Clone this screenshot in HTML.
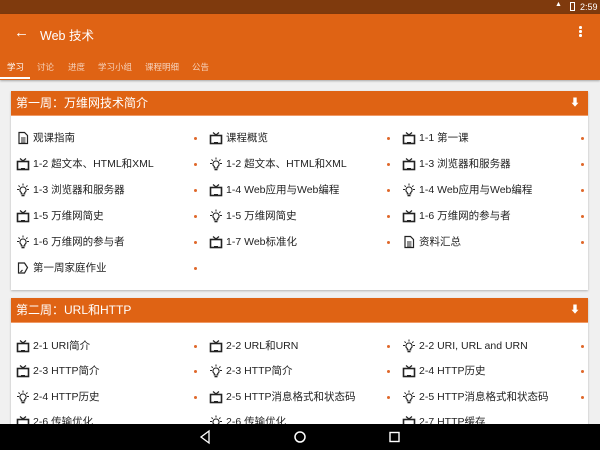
<!DOCTYPE html>
<html><head><meta charset="utf-8"><style>
*{margin:0;padding:0;box-sizing:border-box}
body{width:600px;height:450px;overflow:hidden;background:#f0f0f0;font-family:"Liberation Sans","Noto Sans CJK SC",sans-serif;position:relative}
.abs{position:absolute}
#sb{left:0;top:0;width:600px;height:14px;background:#7f3a0d;color:#fff;font-size:9px}
#ab{left:0;top:14px;width:600px;height:66px;background:#df6314;color:#fff;box-shadow:0 1px 2px rgba(0,0,0,.3)}
.tab{position:absolute;top:47px;font-size:8.5px;color:#f6d3bd}
.card{position:absolute;left:11px;width:577px;background:#fff;box-shadow:0 1px 2px rgba(0,0,0,.25)}
.hd{height:25px;background:#df6314;color:#fff;font-size:12px;line-height:25px;padding-left:5px;position:relative;border-bottom:1px solid #f09a66}
.it{position:absolute;font-size:10.5px;color:#222;white-space:nowrap;line-height:14px}
.it svg{position:absolute;left:-17px;top:0}
.dot{position:absolute;width:3px;height:3px;border-radius:50%;background:#e0682a}
#nb{left:0;top:424px;width:600px;height:26px;background:#000}
</style></head><body>
<svg width="0" height="0" style="position:absolute">
<symbol id="tv" viewBox="0 0 14 14"><path d="M4 1.5l3 2.5 3-2.5" fill="none" stroke="#222" stroke-width="1.2"/><rect x="1.5" y="4.5" width="11" height="8" fill="none" stroke="#222" stroke-width="1.6"/><rect x="5" y="11" width="4" height="1.8" fill="#222"/></symbol>
<symbol id="bulb" viewBox="0 0 14 14"><path d="M7 4a3 3 0 0 0-1.7 5.5V11h3.4V9.5A3 3 0 0 0 7 4z" fill="none" stroke="#222" stroke-width="1.1"/><rect x="5.5" y="12" width="3" height="1.3" fill="#222"/><path d="M7 0.5v2M1 6.5h2M11 6.5h2M2.5 2.5l1.3 1.3M11.5 2.5l-1.3 1.3" stroke="#222" stroke-width="1"/></symbol>
<symbol id="doc" viewBox="0 0 14 14"><path d="M3 1.5h5.5l3 3v8H3z" fill="none" stroke="#222" stroke-width="1.2"/><path d="M5 7h4.5M5 9h4.5M5 11h4.5" stroke="#222" stroke-width="1"/></symbol>
<symbol id="ed" viewBox="0 0 14 14"><path d="M2.5 2h6l3 4.5-3 5.5h-6z" fill="none" stroke="#222" stroke-width="1.2"/><path d="M4.5 11l2-2" stroke="#222" stroke-width="1.2"/></symbol>
</svg>
<div id="sb" class="abs"><span style="position:absolute;left:555px;top:1px;font-size:7px">▲</span><span style="position:absolute;left:570px;top:2px;width:5px;height:9px;border:1px solid #fff"></span><span style="position:absolute;left:580px;top:2px">2:59</span></div>
<div id="ab" class="abs">
<span style="position:absolute;left:14px;top:10px;font-size:15px">←</span>
<span style="position:absolute;left:40px;top:11px;font-size:12.5px">Web 技术</span>
<span style="position:absolute;left:579px;top:12px;width:2.5px;height:2.5px;background:#fff;box-shadow:0 4px 0 #fff,0 8px 0 #fff;border-radius:50%"></span>
<span class="tab" style="left:7px;color:#fff">学习</span>
<span class="tab" style="left:37px">讨论</span>
<span class="tab" style="left:68px">进度</span>
<span class="tab" style="left:98px">学习小组</span>
<span class="tab" style="left:145px">课程明细</span>
<span class="tab" style="left:192px">公告</span>
<span style="position:absolute;left:0;top:63px;width:30px;height:2px;background:#fff"></span>
</div>

<div class="card" style="top:91px;height:199px">
<div class="hd">第一周：万维网技术简介<span style="position:absolute;right:8px;top:0;font-size:10px">⬇</span></div>
<div style="position:absolute;left:0;top:0">
<div class="it" style="left:22px;top:40px"><svg width="14" height="14"><use href="#doc"/></svg>观课指南</div>
<div class="it" style="left:215px;top:40px"><svg width="14" height="14"><use href="#tv"/></svg>课程概览</div>
<div class="it" style="left:408px;top:40px"><svg width="14" height="14"><use href="#tv"/></svg>1-1 第一课</div>
<div class="it" style="left:22px;top:66px"><svg width="14" height="14"><use href="#tv"/></svg>1-2 超文本、HTML和XML</div>
<div class="it" style="left:215px;top:66px"><svg width="14" height="14"><use href="#bulb"/></svg>1-2 超文本、HTML和XML</div>
<div class="it" style="left:408px;top:66px"><svg width="14" height="14"><use href="#tv"/></svg>1-3 浏览器和服务器</div>
<div class="it" style="left:22px;top:92px"><svg width="14" height="14"><use href="#bulb"/></svg>1-3 浏览器和服务器</div>
<div class="it" style="left:215px;top:92px"><svg width="14" height="14"><use href="#tv"/></svg>1-4 Web应用与Web编程</div>
<div class="it" style="left:408px;top:92px"><svg width="14" height="14"><use href="#bulb"/></svg>1-4 Web应用与Web编程</div>
<div class="it" style="left:22px;top:118px"><svg width="14" height="14"><use href="#tv"/></svg>1-5 万维网简史</div>
<div class="it" style="left:215px;top:118px"><svg width="14" height="14"><use href="#bulb"/></svg>1-5 万维网简史</div>
<div class="it" style="left:408px;top:118px"><svg width="14" height="14"><use href="#tv"/></svg>1-6 万维网的参与者</div>
<div class="it" style="left:22px;top:144px"><svg width="14" height="14"><use href="#bulb"/></svg>1-6 万维网的参与者</div>
<div class="it" style="left:215px;top:144px"><svg width="14" height="14"><use href="#tv"/></svg>1-7 Web标准化</div>
<div class="it" style="left:408px;top:144px"><svg width="14" height="14"><use href="#doc"/></svg>资料汇总</div>
<div class="it" style="left:22px;top:170px"><svg width="14" height="14"><use href="#ed"/></svg>第一周家庭作业</div>
<div class="dot" style="left:183px;top:46px"></div><div class="dot" style="left:376px;top:46px"></div><div class="dot" style="left:570px;top:46px"></div>
<div class="dot" style="left:183px;top:72px"></div><div class="dot" style="left:376px;top:72px"></div><div class="dot" style="left:570px;top:72px"></div>
<div class="dot" style="left:183px;top:98px"></div><div class="dot" style="left:376px;top:98px"></div><div class="dot" style="left:570px;top:98px"></div>
<div class="dot" style="left:183px;top:124px"></div><div class="dot" style="left:376px;top:124px"></div><div class="dot" style="left:570px;top:124px"></div>
<div class="dot" style="left:183px;top:150px"></div><div class="dot" style="left:376px;top:150px"></div><div class="dot" style="left:570px;top:150px"></div>
<div class="dot" style="left:183px;top:176px"></div>
</div>
</div>

<div class="card" style="top:298px;height:140px">
<div class="hd">第二周：URL和HTTP<span style="position:absolute;right:8px;top:0;font-size:10px">⬇</span></div>
<div style="position:absolute;left:0;top:0">
<div class="it" style="left:22px;top:41px"><svg width="14" height="14"><use href="#tv"/></svg>2-1 URI简介</div>
<div class="it" style="left:215px;top:41px"><svg width="14" height="14"><use href="#tv"/></svg>2-2 URL和URN</div>
<div class="it" style="left:408px;top:41px"><svg width="14" height="14"><use href="#bulb"/></svg>2-2 URI, URL and URN</div>
<div class="it" style="left:22px;top:66px"><svg width="14" height="14"><use href="#tv"/></svg>2-3 HTTP简介</div>
<div class="it" style="left:215px;top:66px"><svg width="14" height="14"><use href="#bulb"/></svg>2-3 HTTP简介</div>
<div class="it" style="left:408px;top:66px"><svg width="14" height="14"><use href="#tv"/></svg>2-4 HTTP历史</div>
<div class="it" style="left:22px;top:92px"><svg width="14" height="14"><use href="#bulb"/></svg>2-4 HTTP历史</div>
<div class="it" style="left:215px;top:92px"><svg width="14" height="14"><use href="#tv"/></svg>2-5 HTTP消息格式和状态码</div>
<div class="it" style="left:408px;top:92px"><svg width="14" height="14"><use href="#bulb"/></svg>2-5 HTTP消息格式和状态码</div>
<div class="it" style="left:22px;top:117px"><svg width="14" height="14"><use href="#tv"/></svg>2-6 传输优化</div>
<div class="it" style="left:215px;top:117px"><svg width="14" height="14"><use href="#bulb"/></svg>2-6 传输优化</div>
<div class="it" style="left:408px;top:117px"><svg width="14" height="14"><use href="#tv"/></svg>2-7 HTTP缓存</div>
<div class="dot" style="left:183px;top:47px"></div><div class="dot" style="left:376px;top:47px"></div><div class="dot" style="left:570px;top:47px"></div>
<div class="dot" style="left:183px;top:72px"></div><div class="dot" style="left:376px;top:72px"></div><div class="dot" style="left:570px;top:72px"></div>
<div class="dot" style="left:183px;top:98px"></div><div class="dot" style="left:376px;top:98px"></div><div class="dot" style="left:570px;top:98px"></div>
</div>
</div>

<div id="nb" class="abs">
<svg width="600" height="26" style="position:absolute;left:0;top:0">
<path d="M209 7l-8 6 8 6z" fill="none" stroke="#fff" stroke-width="1.3"/>
<circle cx="300" cy="13" r="5" fill="none" stroke="#fff" stroke-width="1.5"/>
<rect x="390" y="8.5" width="9" height="9" fill="none" stroke="#fff" stroke-width="1.4"/>
</svg>
</div>
</body></html>
